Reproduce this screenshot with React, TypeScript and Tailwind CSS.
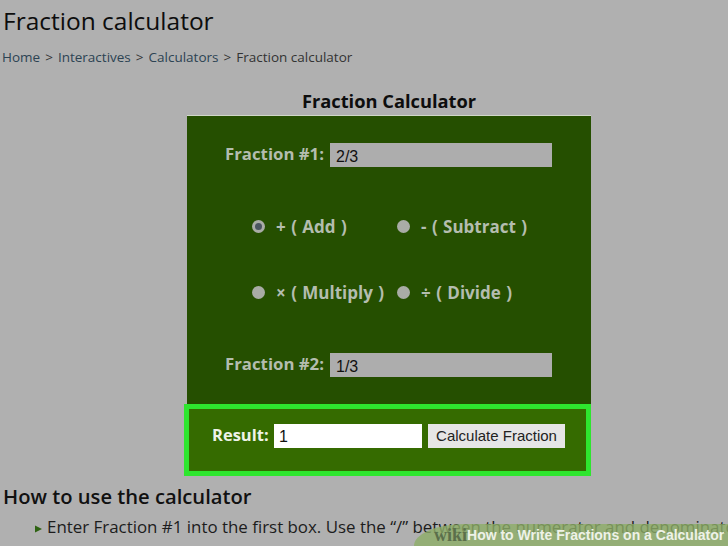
const sans = "font-['Open_Sans','Noto_Sans',sans-serif]";

function Radio({ checked }: { checked?: boolean }) {
  return (
    <span className="flex h-[13px] w-[13px] shrink-0 items-center justify-center rounded-full bg-[#a9aca6]">
      {checked && <span className="h-[7px] w-[7px] rounded-full bg-[#4b5560]" />}
    </span>
  );
}

function Option({ label, checked, width }: { label: string; checked?: boolean; width: string }) {
  return (
    <div className={`flex items-center gap-[11px] ${width}`}>
      <span className="-mt-[1px]"><Radio checked={checked} /></span>
      <span className="text-[17px] leading-[22px] font-bold whitespace-nowrap text-[#b4bdaf] [word-spacing:1px]">{label}</span>
    </div>
  );
}

function FractionRow({ label, value }: { label: string; value: string }) {
  return (
    <div className="flex items-center gap-[5px] pl-[38px]">
      <span className="w-[100px] -mt-[3px] text-[16.8px] leading-[22px] font-bold whitespace-nowrap text-[#b4bdaf]">{label}</span>
      <div className="flex h-[24px] w-[222px] items-center bg-[#adadad] pl-[6px] pt-[3px] font-['Liberation_Sans',sans-serif] text-[16px] text-[#111]">
        {value}
      </div>
    </div>
  );
}

function Sep() {
  return <span className="px-[5px] text-[#333]">&gt;</span>;
}

export default function App() {
  return (
    <div className={`relative h-[546px] w-[728px] overflow-hidden bg-[#b0b0b0] ${sans}`}>
      <h1 className="pt-[4px] pl-[3px] text-[24.5px] leading-[34px] font-normal text-[#0d0d0d]">Fraction calculator</h1>
      <div className="mt-[9px] pl-[2px] text-[13.5px] leading-[20px] text-[#333]">
        <span className="text-[#2c4353]">Home</span><Sep /><span className="text-[#2c4353]">Interactives</span><Sep />
        <span className="text-[#2c4353]">Calculators</span><Sep />Fraction calculator
      </div>
      <div className="mt-[22px] mb-[2px] w-[778px] text-center text-[18.3px] leading-[24px] font-bold text-[#0d0d0d]">Fraction Calculator</div>

      <div className="ml-[187px] w-[404px]">
        <div className="h-[289px] border-t border-[#d0d8c8] bg-[#254f00] pt-[27px]">
          <FractionRow label="Fraction #1:" value="2/3" />
          <div className="mt-[49px] flex pl-[65px]">
            <Option label="+ ( Add )" checked width="w-[145px]" />
            <Option label="- ( Subtract )" width="w-[150px]" />
          </div>
          <div className="mt-[44px] flex pl-[65px]">
            <Option label="× ( Multiply )" width="w-[145px]" />
            <Option label="÷ ( Divide )" width="w-[150px]" />
          </div>
          <div className="mt-[49px]"><FractionRow label="Fraction #2:" value="1/3" /></div>
        </div>
        <div className="-ml-[3px] flex h-[72px] w-[407px] items-start border-[5px] border-[#2ee62e] bg-[#356b00] pl-[23px] pt-[15px]">
          <span className="-mt-[1px] w-[62px] text-[16.5px] leading-[24px] font-bold text-[#eef3e8]">Result:</span>
          <div className="flex h-[24px] w-[148px] items-center bg-white pl-[5px] pt-[2px] font-['Liberation_Sans',sans-serif] text-[16px] text-[#111]">1</div>
          <div className="ml-[6px] flex h-[24px] w-[137px] items-center justify-center bg-[#e6e6e6] font-['Liberation_Sans',sans-serif] text-[15px] text-[#222]">
            Calculate Fraction
          </div>
        </div>
      </div>

      <h2 className="mt-[6px] pl-[3px] text-[20.2px] leading-[28px] font-semibold text-[#111]">How to use the calculator</h2>
      <div className="mt-[6px] flex items-center pl-[35px] text-[16.9px] leading-[22px] whitespace-nowrap text-[#1c1c1c]">
        <svg width="7" height="8" viewBox="0 0 7 8" className="mt-[3px] mr-[5px] shrink-0">
          <path d="M0 0.5L7 4L0 7.5Z" fill="#2e6312" />
        </svg>
        Enter Fraction #1 into the first box. Use the “/” between the numerator and denominator
      </div>

      {/* wikiHow watermark */}
      <div className="absolute top-[524px] left-[414px] flex h-[22px] w-[340px] items-center rounded-tl-[50px_22px] bg-[#8dae68]/80 pl-[20px]">
        <span className="font-['Liberation_Serif',serif] text-[18px] font-bold text-[#5b6f4b]">wiki</span>
        <span className="font-['Liberation_Sans',sans-serif] text-[14px] font-bold whitespace-nowrap text-[#eef2e8]">How to Write Fractions on a Calculator</span>
      </div>
    </div>
  );
}
